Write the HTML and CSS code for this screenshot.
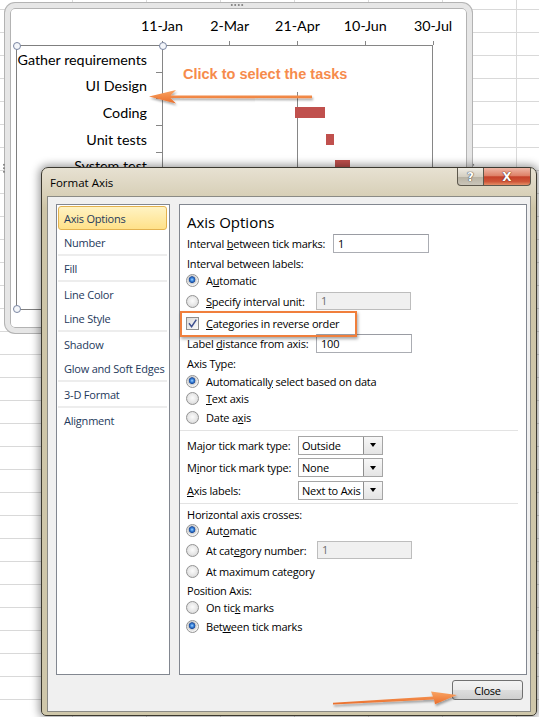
FILE: index.html
```html
<!DOCTYPE html>
<html lang="en">
<head>
<meta charset="utf-8">
<title>Format Axis</title>
<link rel="stylesheet" href="styles.css">
</head>
<body>
<div class="sheet">

  <!-- ============ CHART ============ -->
  <div class="chart">
    <span class="grip grip-top"></span>
    <span class="grip grip-left"></span>
    <span class="grip grip-right"></span>
    <div class="dates">
      <span>11-Jan</span><span>2-Mar</span><span>21-Apr</span><span>10-Jun</span><span>30-Jul</span>
    </div>
    <ul class="cats">
      <li>Gather requirements</li>
      <li>UI Design</li>
      <li>Coding</li>
      <li>Unit tests</li>
      <li>System test</li>
    </ul>
    <div class="plot">
      <div class="prow"></div>
      <div class="prow"></div>
      <div class="prow"><i class="bar" style="margin-left:132px;width:30px"></i></div>
      <div class="prow"><i class="bar" style="margin-left:163px;width:8px"></i></div>
      <div class="prow"><i class="bar" style="margin-left:172px;width:15px"></i></div>
      <p class="callout">Click to select the tasks</p>
    </div>
  </div>

  <!-- ============ DIALOG ============ -->
  <div class="dialog">
    <div class="titlebar">
      <span class="title">Format Axis</span>
      <span class="tb help">?</span>
      <span class="tb close">X</span>
    </div>
    <div class="client">
      <div class="panes">
        <ul class="nav">
          <li class="sel">Axis Options</li>
          <li>Number</li>
          <li class="grp">Fill</li>
          <li class="grp">Line Color</li>
          <li>Line Style</li>
          <li class="grp">Shadow</li>
          <li>Glow and Soft Edges</li>
          <li class="grp">3-D Format</li>
          <li class="grp">Alignment</li>
        </ul>
        <div class="page">
          <h2>Axis Options</h2>
          <div class="row r21"><span class="c146">Interval <u>b</u>etween tick marks:</span><span class="box w96">1</span></div>
          <div class="row r18"><span>Interval between labels:</span></div>
          <div class="row r17"><i class="radio on"></i><span>A<u>u</u>tomatic</span></div>
          <div class="row r24"><i class="radio"></i><span class="c110"><u>S</u>pecify interval unit:</span><span class="box off w95">1</span></div>
          <div class="row r20 chk"><span class="check"><svg viewBox="0 0 11 11" width="11" height="11"><path d="M2 5.2 4.6 8.6 9.3 1.6" fill="none" stroke="#3d4f8e" stroke-width="1.5"/></svg></span><span><u>C</u>ategories in reverse order</span></div>
          <div class="row r21"><span class="c129">Label <u>d</u>istance from axis:</span><span class="box w96">100</span></div>
          <div class="row r19"><span>Axis Type:</span></div>
          <div class="row r16"><i class="radio on"></i><span>Automaticall<u>y</u> select based on data</span></div>
          <div class="row r19"><i class="radio"></i><span><u>T</u>ext axis</span></div>
          <div class="row r18"><i class="radio"></i><span>Date a<u>x</u>is</span></div>
          <div class="rule"></div>
          <div class="row r22"><span class="c111">Ma<u>j</u>or tick mark type:</span><span class="select"><span>Outside</span><b></b></span></div>
          <div class="row r23"><span class="c111">M<u>i</u>nor tick mark type:</span><span class="select"><span>None</span><b></b></span></div>
          <div class="row r22"><span class="c111"><u>A</u>xis labels:</span><span class="select"><span>Next to Axis</span><b></b></span></div>
          <div class="rule thin"></div>
          <div class="row r16"><span>Horizontal axis crosses:</span></div>
          <div class="row r17"><i class="radio on"></i><span>Aut<u>o</u>matic</span></div>
          <div class="row r22"><i class="radio"></i><span class="c111">At cat<u>e</u>gory number:</span><span class="box off w95">1</span></div>
          <div class="row r20"><i class="radio"></i><span>At maximum cate<u>g</u>ory</span></div>
          <div class="row r18"><span>Position Axis:</span></div>
          <div class="row r17"><i class="radio"></i><span>On tic<u>k</u> marks</span></div>
          <div class="row r20"><i class="radio on"></i><span>Bet<u>w</u>een tick marks</span></div>
        </div>
      </div>
      <div class="footer"><span class="btn">Close</span></div>
    </div>
  </div>

  <!-- ============ ANNOTATION ARROWS ============ -->
  <svg class="marks" width="539" height="717" viewBox="0 0 539 717" aria-hidden="true">
    <defs>
      <filter id="sh" x="-10%" y="-60%" width="120%" height="220%">
        <feDropShadow dx="1" dy="2" stdDeviation="1.2" flood-color="#000" flood-opacity=".35"/>
      </filter>
      <linearGradient id="og" x1="0" y1="0" x2="0" y2="1">
        <stop offset="0" stop-color="#f9a463"/>
        <stop offset="1" stop-color="#ea6d2a"/>
      </linearGradient>
    </defs>
    <path d="M149 96.6 L176 90 L170.5 95.6 L312 95.6 L312 98.2 L170.5 98 L176 103.4 Z" fill="url(#og)" filter="url(#sh)"/>
    <path d="M333 702.8 L433 696.6 L431 691.6 L457 695 L435 704.2 L434 699.6 L333 704.6 Z" fill="url(#og)" filter="url(#sh)"/>
  </svg>
</div>
</body>
</html>
```

FILE: styles.css
```css
/* ---------- Base / spreadsheet ---------- */
*{margin:0;padding:0;box-sizing:border-box}
body{width:539px;height:717px;overflow:hidden;font-family:"Open Sans",sans-serif;font-size:11px;color:#000;
  background-color:#fff;
  background-image:linear-gradient(to right,#d9d9d9 1px,transparent 1px),linear-gradient(to bottom,#d9d9d9 1px,transparent 1px);
  background-size:74px 100%,100% 23px;background-position:-2px 0,0 9px}
.sheet{position:relative;width:539px;height:717px}

/* ---------- Chart ---------- */
.chart{position:absolute;left:5px;top:3px;width:467px;height:330px;border:5px solid #e6e6e6;border-radius:10px;
  box-shadow:0 0 0 1px #b3b3b3,inset 0 0 0 1px #b3b3b3;background:#fff;padding-left:6px;
  display:grid;grid-template-columns:146px 271px;grid-template-rows:37px 265px;
  font-family:Lato,"Liberation Sans",sans-serif;font-size:14.3px}
.grip{position:absolute;background:radial-gradient(circle,#8a8a8a 0 .8px,transparent 1.3px) 0 0/3.5px 3.5px}
.grip-top{top:-5px;left:220px;width:14px;height:3.5px}
.grip-left{left:-8px;top:155px;width:3.5px;height:11px}
.grip-right{right:-8px;top:155px;width:3.5px;height:11px}
.dates{grid-column:2;grid-row:1;display:flex;margin:0 -34px;padding-top:9px;
  background:repeating-linear-gradient(to right,transparent 0 33.5px,#868686 33.5px 34.5px,transparent 34.5px 67.8px) left bottom/100% 4px no-repeat}
.dates span{flex:1;text-align:center;line-height:17px}
.cats{grid-column:1;grid-row:2;list-style:none;border:1px solid #7f7f7f;border-right:0;position:relative;
  background:repeating-linear-gradient(to bottom,#868686 0 1px,transparent 1px 26.67px) right -1px/6px 100% no-repeat}
.cats li{height:26.67px;display:flex;align-items:center;justify-content:flex-end;padding-right:15px}
.cats::before,.cats::after,.plot::before{content:"";position:absolute;width:6px;height:6px;border-radius:50%;
  border:1px solid #7a86a2;background:#f4f6fa;z-index:1}
.cats::before{left:-4px;top:-4px}
.cats::after{left:-4px;bottom:-4px}
.plot{grid-column:2;grid-row:2;border:1px solid #868686;position:relative;
  background:repeating-linear-gradient(to right,transparent 0 66.5px,#868686 66.5px 67.5px)}
.plot::before{left:-4px;top:-4px}
.prow{height:26.67px;display:flex;align-items:center}
.bar{display:block;height:11px;background:#c0504d}
.callout{position:absolute;left:0;top:0;right:1px;height:46px;background:#fff;padding:20px 0 0 20px;
  font:bold 14.5px "Liberation Sans",Arial,sans-serif;color:#f68b4c;line-height:17px}

/* ---------- Dialog ---------- */
.dialog{position:absolute;left:41px;top:167px;width:496px;height:549px;z-index:2;letter-spacing:-.22px;
  border:1px solid #3b382f;border-radius:7px 7px 5px 5px;padding:0 5px 3px;display:flex;flex-direction:column;
  background:linear-gradient(#e7e1d2,#d8d0b8 27px,#cec5a7 40px,#cfc7aa);box-shadow:0 0 9px 2px rgba(0,0,0,.4)}
.titlebar{height:28px;display:flex;align-items:center}
.title{flex:1;padding-left:3px;font-size:11.5px;letter-spacing:0}
.tb{align-self:flex-start;height:18px;display:flex;align-items:center;justify-content:center;letter-spacing:0;
  border:1px solid #5d584c;border-top:0;font:bold 12px "DejaVu Sans",sans-serif;color:#fff}
.tb.help{width:27px;border-radius:0 0 0 4px;background:linear-gradient(#efebe2,#d4cfc2 50%,#b7b1a2 52%,#cbc6b9);
  text-shadow:0 0 1px #333,0 0 1px #333}
.tb.close{width:47px;border-left:0;border-radius:0 0 4px 0;
  background:linear-gradient(#efb7a6,#de8168 45%,#c5412a 52%,#cf5638 80%,#e48f67);text-shadow:0 0 1px #5a1a0c,0 0 1px #5a1a0c}
.client{flex:1;background:#f0f0f0;border:1px solid #8a8a85;padding:7px 3px 11px 8px;display:flex;flex-direction:column}
.panes{display:grid;grid-template-columns:114px 348px;gap:9px;height:471px}

/* ---------- Left category list ---------- */
.nav{list-style:none;background:#fff;border:1px solid #828790;padding:1px 2px 1px 1px;color:#1e395b}
.nav li{height:24px;display:flex;align-items:center;padding-left:6px;white-space:nowrap}
.nav li.grp{height:26px;border-top:2px solid #ededed}
.nav li.sel{border:1px solid #e3b24f;border-radius:3px;padding-left:5px;background:linear-gradient(#fff3c3,#ffe189)}

/* ---------- Right option page ---------- */
.page{background:#fff;border:1px solid #828790;padding:7px 0 0 7px}
.page h2{font-size:15px;font-weight:normal;height:21px;line-height:21px;letter-spacing:0}
.row{display:flex;align-items:center;line-height:15px;white-space:nowrap}
.r16{height:16px}.r17{height:17px}.r18{height:18px}.r19{height:19px}.r20{height:20px}
.r21{height:21px}.r22{height:22px}.r23{height:23px}.r24{height:24px}
.c146{width:146px}.c129{width:129px}.c111{width:111px}.c110{width:110px}
.w96{width:96px}.w95{width:95px}
.rule{height:1px;background:#e3e3e3;margin:4px 8px 3px -7px}
.rule.thin{margin:2px 8px 2px -7px}
.box{height:19px;border:1px solid #abadb3;border-top-color:#9a9ca3;background:#fff;padding-left:4px;line-height:17px}
.box.off{background:#f0f0f0;border-color:#bdbdbd;color:#6d6d6d;height:18px;line-height:16px}
.radio{flex:none;width:13px;height:13px;border-radius:50%;border:1px solid #939393;margin:0 7px 0 -1px;
  background:radial-gradient(circle at 50% 45%,#fcfcfc 0,#e6e6e6 55%,#cdcdcd 100%)}
.radio.on{background:radial-gradient(circle at 46% 42%,#a8d4ff 0,#3f8ae0 1.5px,#1c4c9c 3px,#c9c9c9 3.6px,#f3f3f3 5.5px)}
.check{flex:none;width:13px;height:13px;border:1px solid #8f8f8f;margin:0 7px 0 -1px;display:flex;align-items:center;justify-content:center;
  background:linear-gradient(135deg,#dadada,#fbfbfb)}
.chk{position:relative}
.chk::after{content:"";position:absolute;left:-7px;top:-2px;width:173px;height:22px;border:2px solid #f07f3c;
  box-shadow:1px 2px 3px rgba(0,0,0,.35)}
.select{width:85px;height:19px;border:1px solid #a5a5a5;background:#fff;display:flex}
.select span{flex:1;padding-left:3px;line-height:17px}
.select b{width:19px;border-left:1px solid #8e8e8e;background:linear-gradient(#f7f7f7,#e4e4e4);display:flex;align-items:center;justify-content:center}
.select b::after{content:"";border-top:4px solid #000;border-left:3.5px solid transparent;border-right:3.5px solid transparent}

/* ---------- Footer ---------- */
.footer{display:flex;justify-content:flex-end;padding:5px 4px 0 0}
.btn{width:71px;height:20px;border:1px solid #707070;border-radius:3px;display:flex;align-items:center;justify-content:center;
  background:linear-gradient(#f3f3f3,#ebebeb 50%,#dddddd 51%,#cfcfcf)}

/* ---------- Arrows ---------- */
.marks{position:absolute;left:0;top:0;z-index:3;pointer-events:none}
```
